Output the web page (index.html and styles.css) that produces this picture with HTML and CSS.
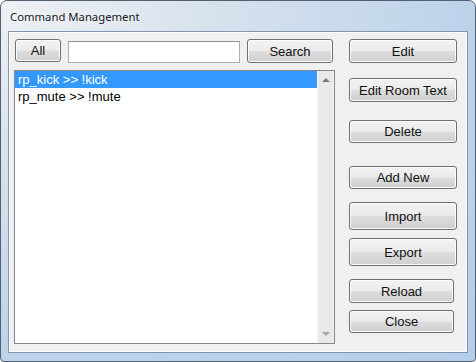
FILE: index.html
```html
<!DOCTYPE html>
<html lang="en">
<head>
    <meta charset="UTF-8">
    <title>Command Management</title>
    <link rel="stylesheet" href="styles.css">
</head>
<body>

<div class="window">
    <div class="titlebar">Command Management</div>
    <div class="client">
        <div class="main">
            <div class="toolbar">
                <button class="btn btn-all">All</button>
                <input type="text" class="search-box">
                <button class="btn btn-search">Search</button>
            </div>
            <div class="listbox">
                <ul class="items">
                    <li class="selected">rp_kick &gt;&gt; !kick</li>
                    <li>rp_mute &gt;&gt; !mute</li>
                </ul>
                <div class="scrollbar">
                    <span class="arrow arrow-up"></span>
                    <span class="arrow arrow-down"></span>
                </div>
            </div>
        </div>
        <div class="side">
            <button class="btn btn-edit">Edit</button>
            <button class="btn btn-room">Edit Room Text</button>
            <button class="btn btn-delete">Delete</button>
            <button class="btn btn-add">Add New</button>
            <button class="btn btn-import">Import</button>
            <button class="btn btn-export">Export</button>
            <button class="btn btn-reload">Reload</button>
            <button class="btn btn-close">Close</button>
        </div>
    </div>
</div>

</body>
</html>
```

FILE: styles.css
```css
html, body {
    margin: 0;
    padding: 0;
    background: #ffffff;
}
.window {
    width: 476px;
    height: 362px;
    box-sizing: border-box;
    border: 1px solid #52606f;
    border-radius: 7px 7px 4px 4px;
    background: radial-gradient(ellipse at 0 0, #eef1f5 0%, #d5e0ec 35%, #bcd3eb 70%, #b4cdea 100%);
    padding: 0 7px 8px 7px;
    display: flex;
    flex-direction: column;
}
.titlebar {
    height: 30px;
    line-height: 31px;
    padding-left: 2px;
    font-family: "Noto Sans", sans-serif;
    font-size: 11.3px;
    color: #1a1a1a;
    text-shadow: 0 0 6px rgba(255, 255, 255, 0.9);
}
.client {
    flex: 1;
    display: flex;
    background: #f0f0f0;
    border: 1px solid #8395ab;
    box-shadow: inset 0 0 0 1px #fbfcfd;
    padding: 7px 0 0 5px;
    font-family: "Liberation Sans", Arial, sans-serif;
    font-size: 13px;
}
.main {
    width: 321px;
    margin-right: 14px;
    display: flex;
    flex-direction: column;
}
.toolbar {
    display: flex;
    align-items: flex-start;
    margin-left: 1px;
    height: 24px;
    margin-bottom: 7px;
}
.btn {
    box-sizing: border-box;
    padding: 0;
    border: 1px solid #707070;
    border-radius: 3px;
    background: linear-gradient(#f2f2f2 0%, #ebebeb 48%, #dddddd 52%, #cfcfcf 100%);
    box-shadow: inset 0 0 0 1px #fbfbfb;
    font-family: "Liberation Sans", Arial, sans-serif;
    font-size: 13px;
    font-weight: normal;
    color: #111111;
    cursor: pointer;
}
.btn-all {
    width: 46px;
    height: 23px;
}
.search-box {
    box-sizing: border-box;
    width: 172px;
    height: 22px;
    margin: 2px 7px 0 7px;
    border: 1px solid #abadb3;
    border-top-color: #8f9196;
    background: #ffffff;
    padding: 0 3px;
}
.btn-search {
    width: 86px;
    height: 24px;
}
.listbox {
    height: 274px;
    box-sizing: border-box;
    border: 1px solid #828790;
    background: #ffffff;
    display: flex;
}
.items {
    flex: 1;
    list-style: none;
    margin: 0;
    padding: 0;
}
.items li {
    height: 17px;
    line-height: 17px;
    padding-left: 3px;
    color: #000000;
}
.items li.selected {
    background: #3399ff;
    color: #ffffff;
}
.scrollbar {
    width: 17px;
    background: #e9e9e9;
    border-left: 1px solid #f7f7f7;
    border-right: 1px solid #f5f5f5;
    box-sizing: border-box;
    display: flex;
    flex-direction: column;
    justify-content: space-between;
    align-items: center;
    padding: 7px 0 7px 0;
}
.arrow {
    width: 0;
    height: 0;
    border-left: 4px solid transparent;
    border-right: 4px solid transparent;
}
.arrow-up {
    border-bottom: 4px solid #7a7a7a;
}
.arrow-down {
    border-top: 4px solid #a8a8a8;
}
.side {
    width: 108px;
    display: flex;
    flex-direction: column;
}
.btn-edit   { height: 24px; }
.btn-room   { height: 24px; margin-top: 15px; }
.btn-delete { height: 23px; margin-top: 18px; }
.btn-add    { height: 23px; margin-top: 23px; }
.btn-import { height: 28px; margin-top: 13px; }
.btn-export { height: 28px; margin-top: 8px; }
.btn-reload { height: 24px; margin-top: 13px; width: 105px; }
.btn-close  { height: 23px; margin-top: 7px; width: 105px; }
```
